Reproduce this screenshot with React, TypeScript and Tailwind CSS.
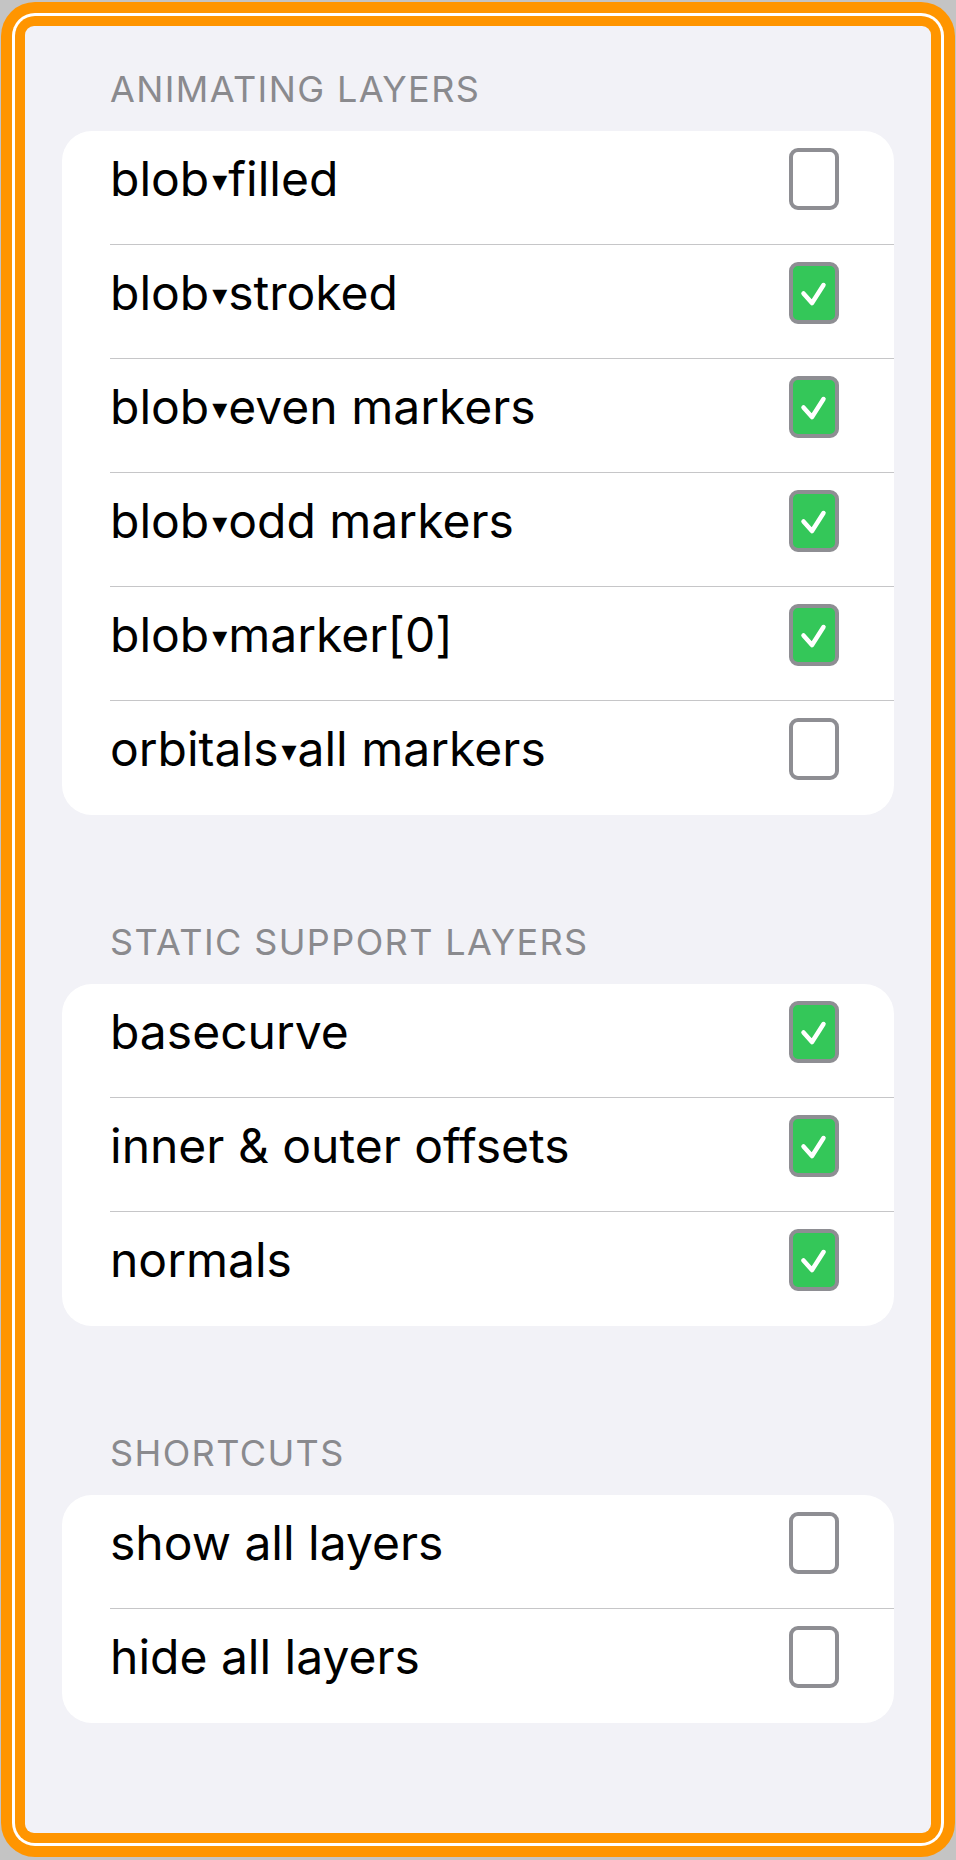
type Layer = { label: string; checked: boolean };

const sections: { title: string; rows: Layer[] }[] = [
  {
    title: "ANIMATING LAYERS",
    rows: [
      { label: "blob▾filled", checked: false },
      { label: "blob▾stroked", checked: true },
      { label: "blob▾even markers", checked: true },
      { label: "blob▾odd markers", checked: true },
      { label: "blob▾marker[0]", checked: true },
      { label: "orbitals▾all markers", checked: false },
    ],
  },
  {
    title: "STATIC SUPPORT LAYERS",
    rows: [
      { label: "basecurve", checked: true },
      { label: "inner & outer offsets", checked: true },
      { label: "normals", checked: true },
    ],
  },
  {
    title: "SHORTCUTS",
    rows: [
      { label: "show all layers", checked: false },
      { label: "hide all layers", checked: false },
    ],
  },
];

function Label({ text }: { text: string }) {
  const parts = text.split("▾");
  if (parts.length === 1) return <span>{text}</span>;
  return (
    <span>
      {parts[0]}
      <span className="ml-[3px] mr-[1px] align-[5px] font-['DejaVu_Sans',sans-serif] text-[30px]">▾</span>
      {parts[1]}
    </span>
  );
}

function Checkbox({ checked }: { checked: boolean }) {
  return (
    <div
      className={
        "h-[62px] w-[50px] shrink-0 rounded-[9px] border-[4px] border-[#8e8e93] " +
        (checked ? "bg-[#34c759]" : "bg-white")
      }
    >
      {checked && (
        <svg viewBox="0 0 42 54" className="h-full w-full">
          <path
            d="M10.5 27.5 L19 37 L30.5 19"
            fill="none"
            stroke="white"
            strokeWidth="4.5"
            strokeLinecap="round"
            strokeLinejoin="round"
          />
        </svg>
      )}
    </div>
  );
}

export default function App() {
  return (
    <div className="h-[1860px] w-[956px] bg-[#c4c4c4] px-[1px] pt-[2px] pb-[3px] font-['Inter',sans-serif]">
      <div className="h-full rounded-[34px] bg-[#ff9500] p-[11px]">
        <div className="h-full rounded-[23px] bg-white p-[3px]">
          <div className="h-full rounded-[20px] bg-[#ff9500] p-[10px]">
            <div className="h-full rounded-[9px] bg-[#f2f2f7] px-[37px] pt-[41px]">
              {sections.map((s, i) => (
                <section key={s.title} className={i > 0 ? "mt-[105px]" : ""}>
                  <h2 className="mb-[20px] h-[44px] pl-[48px] text-[36px] leading-[44px] tracking-[1.4px] text-[#8a8a8e]">
                    {s.title}
                  </h2>
                  <div className="rounded-[30px] bg-white">
                    {s.rows.map((r, j) => (
                      <div key={r.label} className="ml-[48px]">
                        <div
                          className={
                            "flex h-[114px] items-start justify-between pt-[17px] pr-[55px] " +
                            (j < s.rows.length - 1 ? "border-b border-[#c6c6c8]" : "")
                          }
                        >
                          <div className="flex h-[62px] items-center text-[48px] text-black">
                            <Label text={r.label} />
                          </div>
                          <Checkbox checked={r.checked} />
                        </div>
                      </div>
                    ))}
                  </div>
                </section>
              ))}
            </div>
          </div>
        </div>
      </div>
    </div>
  );
}
